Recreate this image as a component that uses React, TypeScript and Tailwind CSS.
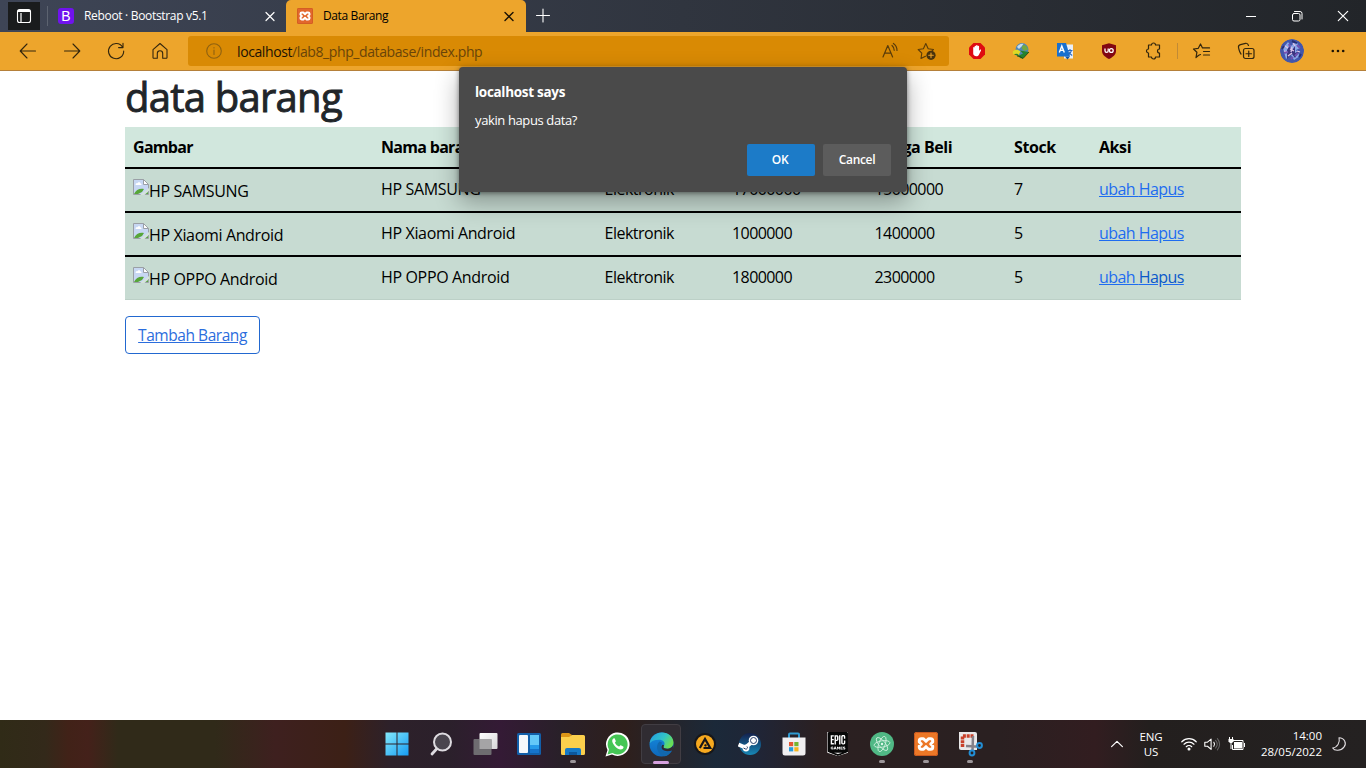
import React from 'react';
import { SiEpicgames } from 'react-icons/si';

type IconProps = { children: React.ReactNode; className?: string; size?: number; stroke?: string; sw?: number };

function Line({ children, className = '', size = 20, stroke = '#33260d', sw = 1.1 }: IconProps) {
  return (
    <svg width={size} height={size} viewBox="0 0 20 20" fill="none" stroke={stroke} strokeWidth={sw} strokeLinecap="round" strokeLinejoin="round" className={`block shrink-0 ${className}`}>
      {children}
    </svg>
  );
}

function Xampp({ size, bg }: { size: number; bg: string }) {
  return (
    <svg width={size} height={size} viewBox="0 0 24 24" className="block shrink-0">
      <rect width="24" height="24" rx="2.5" fill={bg} />
      <rect x=".5" y=".5" width="23" height="23" rx="2" fill="none" stroke="#c9581f" />
      <path d="M12 9.300L9.500 6.800H7.300a2 2 0 0 0-2 2v1.200l2 2-2 2v1.200a2 2 0 0 0 2 2h2.200l2.500-2.500 2.500 2.500h2.200a2 2 0 0 0 2-2V14l-2-2 2-2V8.800a2 2 0 0 0-2-2h-2.200z" fill="none" stroke="#fff" strokeWidth="3" strokeLinejoin="round" />
    </svg>
  );
}

function Slot({ children }: { children: React.ReactNode }) {
  return <div className="flex h-[38px] w-11 shrink-0 items-center justify-center">{children}</div>;
}

function TabStrip() {
  return (
    <div className="flex h-8 items-start bg-linear-to-r from-[#3e4556] via-[#30353f] to-[#222529] text-[12px] text-white">
      <div className="ml-2 mt-0.5 flex h-7 w-8 items-center justify-center bg-[#1a1c1d]">
        <svg width="16" height="16" viewBox="0 0 16 16" fill="none" stroke="#fff" strokeWidth="1.1">
          <rect x="1.5" y="1.5" width="13" height="13" rx="2" />
          <path d="M2 3.5h12M5 5v9" strokeWidth="1.2" />
          <path d="M2 3h12" strokeWidth="2" />
        </svg>
      </div>
      <div className="ml-[7px] mt-1.5 h-5 w-px bg-[#5c6370]" />
      <div className="flex h-8 w-[238px] items-center pl-2.5">
        <div className="flex h-4 w-4 items-center justify-center rounded-[3px] bg-[#7013ee] font-['Liberation_Sans'] text-[14px] leading-none font-normal">B</div>
        <span className="ml-2.5 w-[172px] whitespace-nowrap tracking-[-0.32px]">Reboot · Bootstrap v5.1</span>
        <Line size={20} stroke="#fff" sw={1.2} className="ml-1"><path d="M6 6.5l8 8M14 6.5l-8 8" /></Line>
      </div>
      <div className="flex h-8 w-60 items-center rounded-t-[5px] bg-[#eda52c] pl-[11px] text-black">
        <Xampp size={16} bg="#e2672c" />
        <span className="ml-2.5 w-[172px] whitespace-nowrap tracking-[-0.38px]">Data Barang</span>
        <Line size={20} stroke="#1b1204" sw={1.4} className="ml-1"><path d="M6 6.5l8 8M14 6.5l-8 8" /></Line>
      </div>
      <Line size={20} stroke="#fff" sw={1.1} className="ml-[7px] mt-1.5"><path d="M3.5 9.5h13M10 3v13" /></Line>
      <div className="ml-auto flex h-8 items-center">
        <div className="flex w-[46px] justify-center"><Line stroke="#fff" sw={1}><path d="M5 10.5h10" strokeLinecap="butt" /></Line></div>
        <div className="flex w-[46px] justify-center"><Line stroke="#fff" sw={1}><rect x="5.5" y="7.5" width="7.5" height="7.5" rx="1.5" /><path d="M7.5 5.5h5.5a2 2 0 0 1 2 2V13" /></Line></div>
        <div className="flex w-[46px] justify-center"><Line stroke="#fff" sw={1.2}><path d="M5.3 5.3l9.4 9.4M14.7 5.3l-9.4 9.4" /></Line></div>
      </div>
    </div>
  );
}

function Toolbar() {
  return (
    <div className="flex h-[39px] items-start border-b border-[#b5803a] bg-[#eda52c] pl-1.5">
      <Slot><Line><path d="M17.5 10H2.5M9 3L2.2 10l6.8 7" /></Line></Slot>
      <Slot><Line><path d="M2.5 10h15M11 3l6.8 7-6.8 7" /></Line></Slot>
      <Slot><Line><path d="M16.6 6.2A7.6 7.6 0 1 0 17.7 10M17 2.2v4.4h-4.4" /></Line></Slot>
      <Slot><Line><path d="M3 8.6L10 2.5l7 6.1v7.9a.8.8 0 0 1-.8.8h-3.5v-4.8a2.7 2.7 0 0 0-5.4 0v4.8H3.8a.8.8 0 0 1-.8-.8z" /></Line></Slot>
      <div className="ml-1.5 mt-1 flex h-[30px] w-[761px] items-center rounded-[3px] bg-[#d98a04]">
        <Line size={20} stroke="#8e6111" sw={1.1} className="ml-4"><circle cx="10" cy="10" r="7.3" /><path d="M10 9v4.5M10 6.6v.3" /></Line>
        <span className="ml-[13px] whitespace-nowrap text-[14px] tracking-[-0.4px] text-[#694409]"><span className="text-[#1b1204]">localhost</span>/lab8_php_database/index.php</span>
        <div className="ml-auto flex items-center pr-3">
          <Line stroke="#5a3c0a" sw={1.2} className="mr-[17px]"><path d="M3 16L7.8 4.5 12.6 16M4.6 12.2h6.4M12 4.5a6 6 0 0 1 2.2 4.8M13.4 2.5a8.5 8.5 0 0 1 3.6 7" /></Line>
          <Line stroke="#5a3c0a" sw={1.1}><path d="M8.500 15.200l-4.500 2.300.8-5.300L1.200 8.500l5.200-.8L8.800 2.500l2.400 5.200 5.300.8-1.500 1.400" /><circle cx="14" cy="14.3" r="4.6" fill="#48330c" stroke="none" /><path d="M14 12v4.600M11.700 14.300h4.600" stroke="#e9a12a" /></Line>
        </div>
      </div>
      <div className="flex pl-1.5">
        <Slot>
          <svg width="18" height="18" viewBox="0 0 18 18"><path d="M5.500 1h7L17 5.500v7L12.500 17h-7L1 12.500v-7z" fill="#df0b10" /><path d="M5.200 9V5.800a.7.7 0 0 1 1.400 0V4.400a.7.7 0 0 1 1.500 0V3.700a.7.7 0 0 1 1.500 0v.8a.7.7 0 0 1 1.500 0v4.300l.9-1c.6-.6 1.400 0 1 .7l-2.200 4.400c-1 2-5.600 1.600-5.600-1.400z" fill="#fff" /></svg>
        </Slot>
        <Slot>
          <svg width="18" height="18" viewBox="0 0 18 18"><circle cx="10" cy="7.500" r="6.500" fill="#4f86b8" /><path d="M5 5c1-2.500 4-3.800 6.500-3.200L10 4l-3 3z" fill="#c4dcec" /><path d="M11 3c3 0 4.500 2 5 4.500L12 9 9.500 6z" fill="#74a83f" /><path d="M.8 9.500C3 7 6 7 8.500 9.500l-2 4C5 11.500 3 11 1 12.500z" fill="#ded925" /><path d="M2 12.500c2-1.500 4-1 5 1l4-2L8 8.500l9 1.500-6 6.500c-3 .8-4-2.500-6-3z" fill="#24822d" /><path d="M5 14l3 .5 3 2 6-6.500" fill="none" stroke="#173f19" strokeWidth=".8" /></svg>
        </Slot>
        <Slot>
          <svg width="18" height="18" viewBox="0 0 18 18"><path d="M8 2.500h9v14H8z" fill="#e9eef7" /><path d="M1 1h9l4 13.500H1z" fill="#1970cf" /><path d="M9 14.500h5l-2.500 3z" fill="#1253a4" /><path d="M3.300 10.500L5.800 4l2.500 6.500M4.300 8.400h3" fill="none" stroke="#fff" strokeWidth="1.400" /><path d="M11.500 8.500h5M14 7v1.500M12 13c2-1 3-2.300 3.400-4.400M12.600 9.500c.7 2 2 3 3.600 4" fill="none" stroke="#2668c0" strokeWidth="1.100" /></svg>
        </Slot>
        <Slot>
          <svg width="18" height="18" viewBox="0 0 18 18"><path d="M9 1.200l7 2V9c0 4-4 6.500-7 8-3-1.500-7-4-7-8V3.200z" fill="#820712" /><path d="M5 6.500v2.300a1.600 1.600 0 0 0 3.200 0V6.500" fill="none" stroke="#fff" strokeWidth="1.300" /><circle cx="11.300" cy="8.500" r="1.900" fill="none" stroke="#fff" strokeWidth="1.300" /></svg>
        </Slot>
        <Slot><Line sw={1.2}><path d="M5.500 4h3a2 2 0 1 1 4 0h4v4a2 2 0 1 0 0 4v4h-4a2 2 0 1 1-4 0h-3v-4a2 2 0 1 1 0-4z" /></Line></Slot>
      </div>
      <div className="ml-0.5 mt-[11px] h-4 w-px bg-[#c18a35]" />
      <div className="ml-0.5 flex">
        <Slot><Line sw={1.2}><path d="M6.700 14.300L4 16.500l.9-5.200L1.500 8l4.800-.7L8.500 3l2 3.900h7M11.500 10.500h6M11.500 14h6M8.500 13.500l-1.800.8" /></Line></Slot>
        <Slot><Line sw={1.2}><rect x="7.500" y="7.500" width="10.500" height="10" rx="2" /><path d="M12.750 10v5.500M10 12.750h5.500M5 13C3.500 11.500 3 9 2.500 6.500 2.200 4.800 3 4 4.500 3.600l5-1.300c1.500-.3 2.500.4 3 2.200" /></Line></Slot>
        <div className="ml-0.5"><Slot>
          <svg width="24" height="24" viewBox="0 0 24 24" className="rounded-full"><circle cx="12" cy="12" r="12" fill="#4257ac" /><path d="M3 9l5-6 3 4 5-5 4 7-4 2 4 6-6 4-3-5-5 4z" fill="#8aa8e8" /><path d="M7 11l3-5 1 7 4-6v7l4-2-4 7-3-4-5 5z" fill="#3b3480" /><path d="M5 7l3 2M13 4l2 3M17 12l3 1M8 17l4-3M10 10l4 2M12 8l-1 5M4 12l3 1" stroke="#e1c5e7" strokeWidth="1.300" /><path d="M4 14l4-1M15 17l3-3M9 5l1 3M17 6l3 3M11 20l2-2" stroke="#7152b2" strokeWidth="2" /><path d="M12 2l5 2M2 10l2-3M19 18l2-3" stroke="#283077" strokeWidth="2" /></svg>
        </Slot></div>
        <div className="ml-0.5"><Slot><svg width="20" height="20" viewBox="0 0 20 20" fill="#1b1204"><circle cx="4.800" cy="10" r="1.300" /><circle cx="10" cy="10" r="1.300" /><circle cx="15.200" cy="10" r="1.300" /></svg></Slot></div>
      </div>
    </div>
  );
}

function BrokenImage() {
  return (
    <svg width="16" height="16" viewBox="0 0 16 16" className="-mt-2 block shrink-0">
      <path d="M.5.5h10l5 5v10H.5z" fill="#c7d7f3" stroke="#9a9fa6" />
      <path d="M2.500 5.500c0-1 1-1.500 1.800-1.200C5 2.500 7.500 3 7.500 4.500c1 0 1.300 1 .8 1.500H3z" fill="#fff" />
      <path d="M1 15c2-4.500 6-6 10-5l-2 3-4 2z" fill="#57a63a" />
      <path d="M10.500.5v5h5z" fill="#fff" stroke="#9a9fa6" />
      <path d="M7 16l9-7v2.500L11.500 16z" fill="#d5e3dc" />
      <path d="M12.500 15h2.500v-2z" fill="#57a63a" />
    </svg>
  );
}

const COLS = 'grid grid-cols-[248px_223.5px_127.5px_142.5px_139.5px_85px_150px]';

const rows = [
  { name: 'HP SAMSUNG', kategori: 'Elektronik', jual: '17000000', beli: '15000000', stock: '7' },
  { name: 'HP Xiaomi Android', kategori: 'Elektronik', jual: '1000000', beli: '1400000', stock: '5' },
  { name: 'HP OPPO Android', kategori: 'Elektronik', jual: '1800000', beli: '2300000', stock: '5' },
];

function Page() {
  return (
    <main className="relative h-[649px] bg-white pl-[125px]">
      <h1 className="h-14 whitespace-nowrap pt-0.5 text-[40px] leading-12 font-medium tracking-[-0.75px] text-[#212529] [-webkit-text-stroke:0.9px_#212529]">data barang</h1>
      <div className="w-[1116px] border-b border-[#bcd0c7] text-[16px] leading-6 whitespace-nowrap text-black">
        <div className={`${COLS} h-10 bg-[#d1e7dd] font-bold`}>
          {['Gambar', 'Nama barang', 'Kategori', 'Harga Jual', 'Harga Beli', 'Stock', 'Aksi'].map((h) => (
            <div key={h} className={h === 'Gambar' || h === 'Nama barang' ? 'px-2 pt-2 tracking-[-0.7px]' : 'px-2 pt-2 tracking-[-0.42px]'}>{h}</div>
          ))}
        </div>
        {rows.map((r, i) => (
          <div key={r.name} className={`${COLS} h-11 border-t-2 border-black bg-[#c7dbd2] tracking-[-0.35px]`}>
            <div className="flex items-center px-2 pt-0.5"><BrokenImage /><span>{r.name}</span></div>
            <div className="px-2 pt-2">{r.name}</div>
            <div className="px-2 pt-2 tracking-[-0.5px]">{r.kategori}</div>
            <div className="px-2 pt-2 tracking-[-0.58px]">{r.jual}</div>
            <div className="px-2 pt-2 tracking-[-0.58px]">{r.beli}</div>
            <div className="px-2 pt-2">{r.stock}</div>
            <div className="px-2 pt-2 tracking-[-0.56px] text-[#1e6cf0] underline">ubah <span className={i === 2 ? 'text-[#0a58ca]' : ''}>Hapus</span></div>
          </div>
        ))}
      </div>
      <button className="mt-4 flex h-[38px] w-[135px] items-center justify-center rounded-[4px] border border-[#2268d0] pt-0.5 text-[15.5px] whitespace-nowrap tracking-[-0.45px] text-[#2b6ddd] underline">Tambah Barang</button>
      <div className="absolute top-[-4px] left-[459px] h-[125px] w-[448px] rounded-[4px] bg-[#4a4a4a] p-4 text-white shadow-[0_10px_24px_rgba(0,0,0,0.32),0_1px_5px_rgba(0,0,0,0.45)]">
        <div className="h-[18px] text-[13.5px] leading-[18px] font-bold tracking-[-0.3px]">localhost says</div>
        <div className="mt-[9px] h-5 text-[13px] leading-5 tracking-[-0.38px]">yakin hapus data?</div>
        <div className="mt-3.5 flex justify-end gap-2 text-[12px] font-semibold tracking-[-0.35px]">
          <button className="h-8 w-[68px] rounded-[2px] bg-[#1c7bc8] pr-0.5">OK</button>
          <button className="h-8 w-[68px] rounded-[2px] bg-[#5c5c5c]">Cancel</button>
        </div>
      </div>
    </main>
  );
}

function TaskItem({ children, dot, active }: { children: React.ReactNode; dot?: boolean; active?: boolean }) {
  return (
    <div className="flex h-12 w-[44.07px] shrink-0 items-center justify-center">
      <div className={`relative flex h-10 w-10 items-center justify-center rounded-[4px] ${active ? 'border border-[#413d43] bg-[#302c32]' : ''}`}>
        {children}
        {dot && <div className="absolute bottom-px h-[3px] w-1.5 rounded-full bg-[#9c9699]" />}
        {active && <div className="absolute -bottom-px h-[3px] w-4 rounded-full bg-[#d6a1df]" />}
      </div>
    </div>
  );
}

function Taskbar() {
  return (
    <footer className="flex h-12 items-center bg-[linear-gradient(90deg,#302b17_0px,#33291a_45px,#412218_68px,#44211a_88px,#302a19_118px,#302a19_215px,#3e201f_275px,#3c2016_345px,#2d212a_390px,#2b202b_450px,#341a35_500px,#292029_560px,#2e1f1c_625px,#1b2939_715px,#202536_760px,#2b2021_820px,#2a2021_1000px,#321d20_1095px,#231f1e_1150px,#242121_1366px)]">
      <div className="ml-[375px] flex">
        <TaskItem><svg width="24" height="24" viewBox="0 0 24 24"><defs><linearGradient id="win" x1="0" y1="0" x2="1" y2="1"><stop stopColor="#84e9fb" /><stop offset="1" stopColor="#169cf3" /></linearGradient></defs><path d="M.5.5h11v11H.5zM12.500.5h11v11h-11zM.5 12.500h11v11H.5zM12.500 12.500h11v11h-11z" fill="url(#win)" /></svg></TaskItem>
        <TaskItem><svg width="24" height="24" viewBox="0 0 24 24" fill="#4a454e" stroke="#dedbe0"><path d="M8 16.500l-5 5.500" strokeWidth="2.800" strokeLinecap="round" /><circle cx="13.500" cy="10" r="8.500" strokeWidth="2" /></svg></TaskItem>
        <TaskItem><svg width="26" height="26" viewBox="0 0 26 26"><defs><linearGradient id="tv" x1="0" y1="0" x2="1" y2="1"><stop stopColor="#fff" /><stop offset="1" stopColor="#d7d5d8" /></linearGradient></defs><rect x="7.500" y="2" width="18" height="16" rx="1" fill="url(#tv)" /><rect x="1.500" y="8" width="18" height="16" rx="1" fill="#6e6c70" /><path d="M7.500 8h12v10h-12z" fill="#a5a4a6" /></svg></TaskItem>
        <TaskItem><svg width="24" height="24" viewBox="0 0 24 24"><rect y="1" width="24" height="22" rx="1.500" fill="#125fa9" /><rect x="2" y="3" width="9" height="18" rx="1" fill="#f5f8fb" /><path d="M13 3h9v10h-9z" fill="#64c8f8" /><path d="M13 13h9v4h-9z" fill="#269bea" /><path d="M13 17h9v4h-9z" fill="#1674cb" /></svg></TaskItem>
        <TaskItem dot><svg width="24" height="24" viewBox="0 0 24 24"><path d="M0 4V2.500Q0 1 1.500 1H8l3 2-3 3H0z" fill="#dc9517" /><path d="M0 5h8l3-2h11.500Q24 3 24 4.500v17q0 1.500-1.500 1.500h-21Q0 23 0 21.500z" fill="#fbcf4c" /><path d="M4 23v-5q0-2 2-2h12q2 0 2 2v5z" fill="#1679c6" /><path d="M8 20h8v3H8z" fill="#0c579c" /></svg></TaskItem>
        <TaskItem><svg width="25" height="25" viewBox="0 0 25 25"><path d="M.5 24.500l2-6.500a11.800 11.800 0 1 1 4.500 4.500z" fill="#fff" /><path d="M2.500 22.500l1.500-5a10 10 0 1 1 3.500 3.500z" fill="#45c655" /><path d="M8.500 6.500c-2 1.500-1.500 4 .8 6.900 2.600 3.200 6 5 8.200 3.600 1.300-.8 1.200-2.200.7-2.500l-2.500-1.200c-.8-.2-1 1.500-1.800 1.300-1.800-.8-3.300-2.300-4-3.800-.1-.7 1.200-1.200.9-1.900L9.700 6.600c-.3-.5-.8-.3-1.200-.1z" fill="#fff" /></svg></TaskItem>
        <TaskItem active><svg width="25" height="25" viewBox="0 0 24 24"><defs><linearGradient id="e1" x1="0" y1="0" x2="1" y2=".5"><stop stopColor="#249be1" /><stop offset=".6" stopColor="#31c4c7" /><stop offset="1" stopColor="#69de56" /></linearGradient><linearGradient id="e2" x1="0" y1="0" x2="0" y2="1"><stop stopColor="#178be0" /><stop offset="1" stopColor="#0d68bb" /></linearGradient></defs><circle cx="12" cy="12" r="11.500" fill="url(#e2)" /><path d="M10 9c-5 5-1 13 4.500 14.300 3 0 5.500-2 7.500-5.300-5 2-9.500 1-10.500-3-.5-2.500 1-4 1-5z" fill="#1268ae" /><path d="M.6 11C1.500 3.500 8 .5 12.500.5 19 .5 23.500 5 23.500 10c0 4-3 6-6 6-4 0-4-1.500-3-3 1.500-3-1-5.500-5-5.500C5 7.500 2 9 .6 11z" fill="url(#e1)" /><path d="M14.500 13c-1 1.500-1 3 3 3 2.500 0 4.500-1.200 5.500-3v4.500c-5 1.500-11.200 1.400-11-3 .1-2 1.300-3 2.500-1.500z" fill="#302c32" /></svg></TaskItem>
        <TaskItem><svg width="24" height="24" viewBox="0 0 24 24"><circle cx="12" cy="12" r="11" fill="#171719" /><circle cx="12" cy="12" r="9" fill="#f6a91f" /><path d="M6.800 16L12 7l5.200 9h-6.700M11.500 13l2 .8" fill="none" stroke="#171719" strokeWidth="2.200" /></svg></TaskItem>
        <TaskItem><svg width="24" height="24" viewBox="0 0 24 24"><defs><linearGradient id="st" x2="0" y2="1"><stop stopColor="#13204c" /><stop offset="1" stopColor="#1788b7" /></linearGradient></defs><circle cx="12" cy="12" r="11" fill="url(#st)" /><path d="M.5 12.500l7 3 7-6" stroke="#fff" strokeWidth="4" fill="none" /><circle cx="8" cy="16" r="3.400" fill="#fff" /><circle cx="15.500" cy="8.500" r="4.800" fill="#fff" /><circle cx="15.500" cy="8.500" r="3" fill="none" stroke="#273f68" /><path d="M5.500 16l2 1a1.500 1.500 0 0 0 1.500-2.500" fill="none" stroke="#273f68" /></svg></TaskItem>
        <TaskItem><svg width="24" height="24" viewBox="0 0 24 24"><path d="M7 6V2.500Q7 1.500 8 1.500h8q1 0 1 1V6" fill="none" stroke="#309bd2" strokeWidth="2" /><path d="M.5 5.500h23V21q0 2.500-2.500 2.500H3Q.5 23.500.5 21z" fill="#f0eff1" /><path d="M7 10h4.200v4.200H7z" fill="#e45632" /><path d="M12.300 10h4.200v4.200h-4.200z" fill="#74b530" /><path d="M7 15.200h4.200v4.200H7z" fill="#249bdc" /><path d="M12.300 15.200h4.200v4.200h-4.200z" fill="#f5b51e" /></svg></TaskItem>
        <TaskItem><SiEpicgames size={24} color="#070707" className="bg-white [clip-path:polygon(7%_0,93%_0,93%_86%,50%_100%,7%_86%)]" /></TaskItem>
        <TaskItem dot><svg width="24" height="24" viewBox="0 0 24 24"><circle cx="12" cy="12" r="12" fill="#50b885" /><g fill="none" stroke="#cdeedd" strokeWidth=".9"><ellipse cx="12" cy="12" rx="3.200" ry="8" transform="rotate(20 12 12)" /><ellipse cx="12" cy="12" rx="3.200" ry="8" transform="rotate(80 12 12)" /><ellipse cx="12" cy="12" rx="3.200" ry="8" transform="rotate(140 12 12)" /></g><circle cx="12" cy="12" r="1.200" fill="#e1f7ec" /></svg></TaskItem>
        <TaskItem dot><Xampp size={24} bg="#ec7827" /></TaskItem>
        <TaskItem dot><svg width="26" height="26" viewBox="0 0 26 26"><path d="M2 1h16q2 0 2 2v16H4q-2 0-2-2z" fill="#e9e8e9" /><path d="M5.500 16V5H17" fill="none" stroke="#c8402a" strokeWidth="3.500" strokeDasharray="3 .8" /><path d="M9 15l11 .5M15.500 20l.5-15" stroke="#858087" strokeWidth="2.500" /><circle cx="22.500" cy="14.500" r="2.400" fill="none" stroke="#228ed4" strokeWidth="2" /><circle cx="15" cy="22" r="2.400" fill="none" stroke="#228ed4" strokeWidth="2" /></svg></TaskItem>
      </div>
      <div className="ml-auto flex h-12 items-center text-[12px] leading-4 whitespace-nowrap text-white">
        <Line size={18} stroke="#fff" sw={1.3}><path d="M4 13l6-6 6 6" /></Line>
        <div className="ml-2.5 w-[30px] text-center text-[11.5px] leading-[15px] tracking-[-0.1px]">ENG<br />US</div>
        <Line size={18} stroke="#fff" sw={1.4} className="ml-3.5"><path d="M2 7.500c4.500-4.500 11.500-4.500 16 0M4.500 10.200c3-3 8-3 11 0M7 13c1.600-1.600 4.400-1.600 6 0" /><circle cx="10" cy="15.500" r="1" fill="#fff" /></Line>
        <Line size={18} stroke="#fff" sw={1.2} className="ml-[5px]"><path d="M2 8v4.500h3l4 3.500V4.500L5 8zM12 8c1 1.300 1 3.200 0 4.500" /><path d="M14 6c2.200 2.500 2.200 6 0 8.500M16 4c3.200 3.500 3.200 9 0 12.500" stroke="#666" /></Line>
        <svg width="18" height="16" viewBox="0 0 18 16" className="ml-[7px] block"><path d="M6 6h8v6.500H6z" fill="#fff" /><path d="M5 4.500h10v9H4.500V9M16.500 7v4M1.500 1v3M4.500 1v3M3 6v7" fill="none" stroke="#fff" /><path d="M.5 3h5v2.500L4 7H2L.5 5.500z" fill="#fff" /></svg>
        <div className="ml-3 w-[64px] text-right text-[11.5px] leading-4 tracking-[0px]">14:00<br />28/05/2022</div>
        <Line size={18} stroke="#e3dfe2" sw={1.2} className="mr-[18px] ml-2"><path d="M10 3c6 0 9 6 5.500 10.500S5 18 3 14.500C8 14 11.500 8.500 10 3z" /></Line>
      </div>
    </footer>
  );
}

export default function App() {
  return (
    <div className="flex h-[768px] w-[1366px] flex-col overflow-hidden bg-white font-['Open_Sans','Noto_Sans',sans-serif]">
      <TabStrip />
      <Toolbar />
      <Page />
      <Taskbar />
    </div>
  );
}
